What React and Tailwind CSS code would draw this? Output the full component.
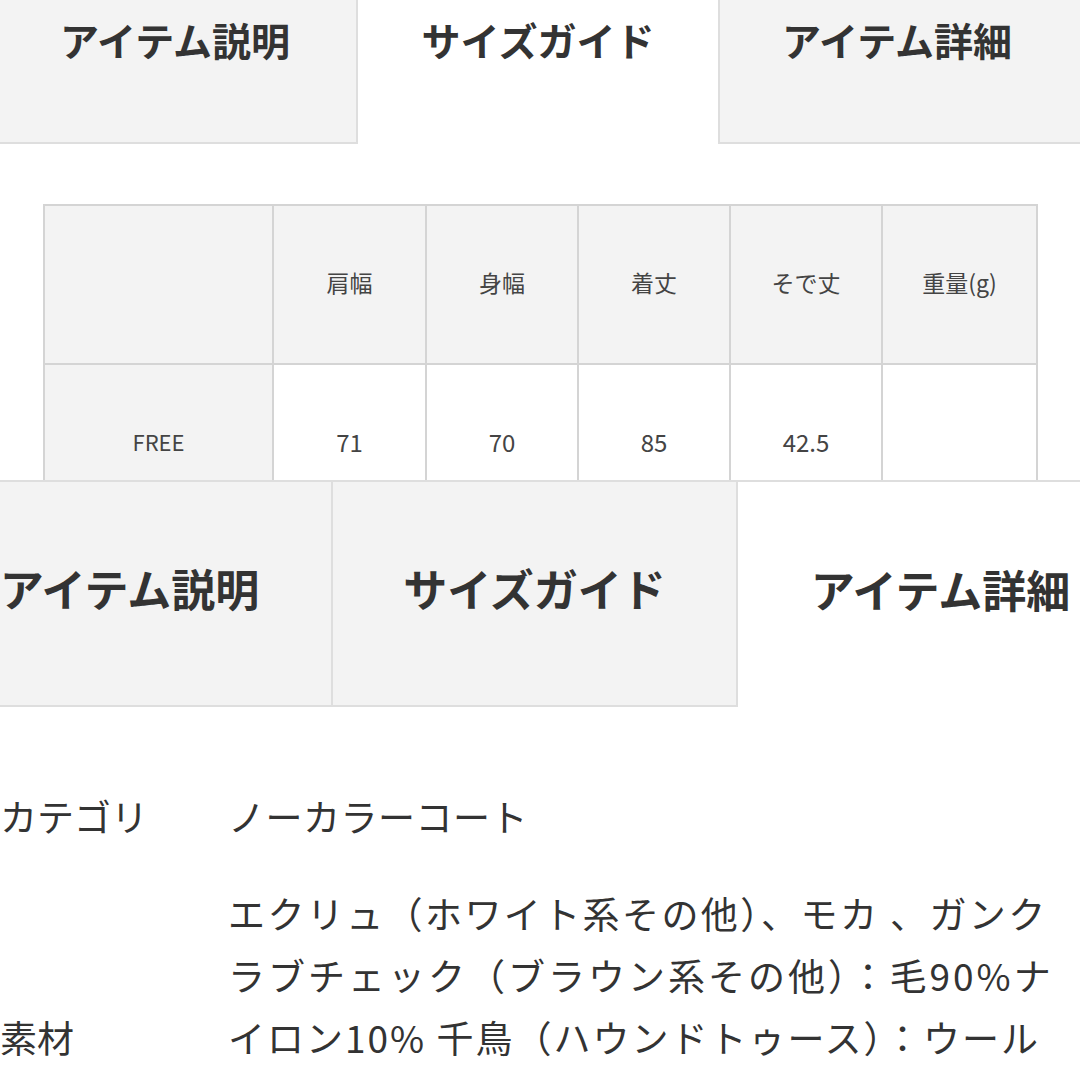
import React from "react";

const jp = { fontFamily: '"Noto Sans CJK JP", "Noto Sans", sans-serif' };

function TopTabs() {
  return (
    <div className="flex h-[144px]">
      <div className="w-[358px] shrink-0 bg-[#f3f3f3] border-r-2 border-b-2 border-[#dedede] flex justify-center pt-[11px] pr-[6px]">
        <span className="text-[39px] leading-[56px] font-bold text-[#333]">アイテム説明</span>
      </div>
      <div className="w-[360px] shrink-0 bg-white flex justify-center pt-[11px]">
        <span className="text-[39px] leading-[56px] font-bold text-[#333]">サイズガイド</span>
      </div>
      <div className="flex-1 bg-[#f3f3f3] border-l-2 border-b-2 border-[#dedede] flex justify-center pt-[11px] pr-[6px]">
        <span className="text-[39px] leading-[56px] font-bold text-[#333]">アイテム詳細</span>
      </div>
    </div>
  );
}

function SizeTable() {
  const heads = ["肩幅", "身幅", "着丈", "そで丈", "重量(g)"];
  const vals = ["71", "70", "85", "42.5", ""];
  return (
    <div className="pt-[60px] pl-[43px]">
      <table className="table-fixed border-collapse w-[993px] text-[#444]">
        <colgroup>
          <col className="w-[229px]" />
          <col className="w-[153px]" />
          <col className="w-[152px]" />
          <col className="w-[152px]" />
          <col className="w-[152px]" />
          <col className="w-[155px]" />
        </colgroup>
        <tbody>
          <tr className="h-[159px]">
            <td className="border-2 border-[#d4d4d4] bg-[#f3f3f3]"></td>
            {heads.map((h) => (
              <td key={h} className="border-2 border-[#d4d4d4] bg-[#f3f3f3] text-center align-middle text-[23px] pb-[5px]">
                {h}
              </td>
            ))}
          </tr>
          <tr className="h-[160px]">
            <td className="border-2 border-[#d4d4d4] bg-[#f3f3f3] text-center align-middle text-[22px] pb-[5px]">FREE</td>
            {vals.map((v, i) => (
              <td key={i} className="border-2 border-[#d4d4d4] bg-white text-center align-middle text-[24px] pb-[5px]">
                {v}
              </td>
            ))}
          </tr>
        </tbody>
      </table>
    </div>
  );
}

function BottomTabs() {
  return (
    <div className="flex h-[227px] border-t-2 border-[#dedede] overflow-hidden">
      <div className="w-[405px] shrink-0 ml-[-72px] bg-[#f3f3f3] border-r-2 border-b-2 border-[#dedede] flex items-center justify-center pb-[12px]">
        <span className="text-[44px] leading-[60px] font-bold text-[#333]">アイテム説明</span>
      </div>
      <div className="w-[405px] shrink-0 bg-[#f3f3f3] border-r-2 border-b-2 border-[#dedede] flex items-center justify-center pb-[12px]">
        <span className="text-[44px] leading-[60px] font-bold text-[#333]">サイズガイド</span>
      </div>
      <div className="w-[405px] shrink-0 bg-white flex items-center justify-center pb-[12px]">
        <span className="text-[44px] leading-[60px] font-bold text-[#333]">アイテム詳細</span>
      </div>
    </div>
  );
}

function Details() {
  return (
    <div className="pt-[78px] text-[#333] text-[37px] leading-[62px]">
      <div className="grid grid-cols-[228px_1fr]">
        <div>カテゴリ</div>
        <div className="tracking-[0.5px]">ノーカラーコート</div>
      </div>
      <div className="grid grid-cols-[228px_1fr] mt-[35px]">
        <div className="pt-[124px]">素材</div>
        <div>
          <div className="whitespace-nowrap tracking-[2.4px]">エクリュ（ホワイト系その他）、モカ 、ガンク</div>
          <div className="whitespace-nowrap tracking-[3px]">ラブチェック（ブラウン系その他）：毛90%ナ</div>
          <div className="whitespace-nowrap tracking-[2px]">イロン10% 千鳥（ハウンドトゥース）：ウール</div>
        </div>
      </div>
    </div>
  );
}

export default function App() {
  return (
    <div className="w-[1080px] h-[1080px] overflow-hidden bg-white" style={jp}>
      <div className="h-[480px] overflow-hidden">
        <TopTabs />
        <SizeTable />
      </div>
      <BottomTabs />
      <Details />
    </div>
  );
}
